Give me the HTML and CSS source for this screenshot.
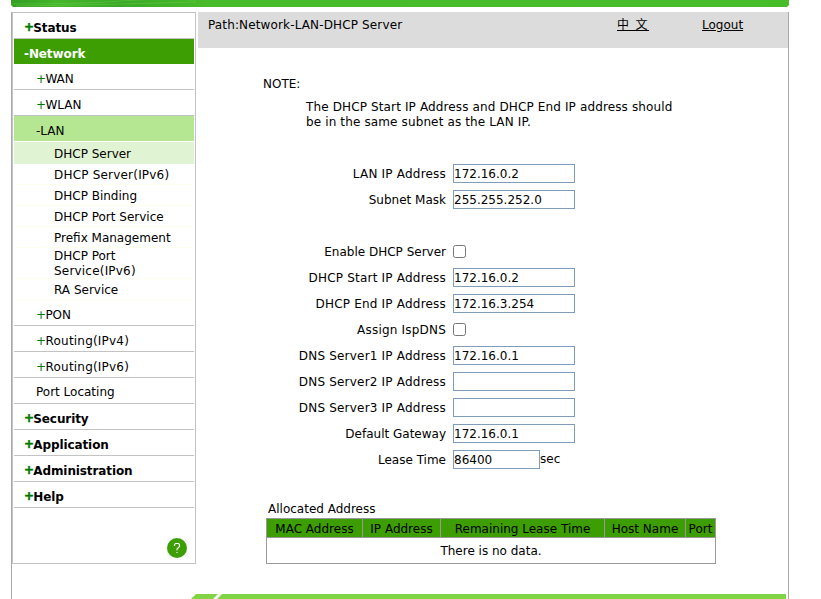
FILE: index.html
```html
<!DOCTYPE html>
<html lang="en">
<head>
<meta charset="utf-8">
<title>DHCP Server</title>
<link rel="stylesheet" href="styles.css">
</head>
<body>
<div class="banner"><svg width="778" height="7" viewBox="0 0 778 7"><defs><linearGradient id="g" x1="0" x2="1"><stop offset="0" stop-color="#329f22"/><stop offset=".06" stop-color="#46b62c"/><stop offset=".14" stop-color="#3aa928"/><stop offset=".25" stop-color="#48bb2a"/><stop offset="1" stop-color="#48bd2a"/></linearGradient></defs><path d="M0 0H778V5L776 7H2L0 5Z" fill="url(#g)"/><path d="M0 4Q70 4 110 1T185 0M5 6Q80 5 185 2" fill="none" stroke="#6cce4c" stroke-width=".7" opacity=".6"/></svg></div>
<div class="page">
  <nav class="menu">
    <ul class="items">
      <li class="top"><i>+</i>Status</li>
      <li class="top open">-Network</li>
      <li class="mid"><i>+</i>WAN</li>
      <li class="mid"><i>+</i>WLAN</li>
      <li class="mid current">-LAN</li>
      <li class="sub selected">DHCP Server</li>
      <li class="sub wide">DHCP Server(IPv6)</li>
      <li class="sub">DHCP Binding</li>
      <li class="sub">DHCP Port Service</li>
      <li class="sub">Prefix Management</li>
      <li class="sub double">DHCP Port<br><span class="wide">Service(IPv6)</span></li>
      <li class="sub">RA Service</li>
      <li class="mid"><i>+</i>PON</li>
      <li class="mid wide"><i>+</i>Routing(IPv4)</li>
      <li class="mid wide"><i>+</i>Routing(IPv6)</li>
      <li class="mid leaf">Port Locating</li>
      <li class="top"><i>+</i>Security</li>
      <li class="top"><i>+</i>Application</li>
      <li class="top"><i>+</i>Administration</li>
      <li class="top"><i>+</i>Help</li>
    </ul>
    <div class="help"><svg width="22" height="20" viewBox="0 0 22 20"><path d="M0 0H22V20H0Z" fill="#f8f8f8"/><circle cx="10" cy="10" r="10" fill="#3c9e02"/><path d="M7.500 8V6.500L8.500 5.500H11.500L12.500 6.500V8.500L10 11V12.500M10 14V15" fill="none" stroke="#fff" stroke-width="1.100"/></svg></div>
  </nav>
  <main class="main">
    <header class="path"><span class="crumb">Path:Network-LAN-DHCP Server</span><a class="lang">中 文</a><a class="logout">Logout</a></header>
    <section class="note"><div>NOTE:</div><p>The DHCP Start IP Address and DHCP End IP address should<br>be in the same subnet as the LAN IP.</p></section>
    <form class="form">
      <label class="wide">LAN IP Address</label><div><input type="text" value="172.16.0.2"></div>
      <label>Subnet Mask</label><div><input type="text" value="255.255.252.0"></div>
      <span class="space"></span>
      <label>Enable DHCP Server</label><div><input type="checkbox"></div>
      <label class="wide">DHCP Start IP Address</label><div><input type="text" value="172.16.0.2"></div>
      <label class="wide">DHCP End IP Address</label><div><input type="text" value="172.16.3.254"></div>
      <label class="wide">Assign IspDNS</label><div><input type="checkbox"></div>
      <label class="wide">DNS Server1 IP Address</label><div><input type="text" value="172.16.0.1"></div>
      <label class="wide">DNS Server2 IP Address</label><div><input type="text"></div>
      <label class="wide">DNS Server3 IP Address</label><div><input type="text"></div>
      <label>Default Gateway</label><div><input type="text" value="172.16.0.1"></div>
      <label>Lease Time</label><div><input class="short" type="text" value="86400"><span class="unit">sec</span></div>
    </form>
    <section class="leases">
      <div class="caption">Allocated Address</div>
      <table>
        <colgroup><col class="c1"><col class="c2"><col class="c3"><col class="c4"><col class="c5"></colgroup>
        <tr class="head"><th>MAC Address</th><th>IP Address</th><th>Remaining Lease Time</th><th>Host Name</th><th>Port</th></tr>
        <tr class="empty"><td colspan="5">There is no data.</td></tr>
      </table>
    </section>
    <footer><svg width="596" height="5" viewBox="0 0 596 5"><path d="M0 5L5 0H27L22 5Z" fill="#80d544"/><path d="M26 5L31 0H595V5Z" fill="#80d544"/></svg></footer>
  </main>
</div>
</body>
</html>
```
FILE: styles.css
```css
* { box-sizing: border-box; }
body { margin: 0; width: 821px; height: 599px; overflow: hidden; background: #fff; color: #000; font: 12px/15px Verdana, "DejaVu Sans", "Noto Sans CJK SC", sans-serif; }
svg { display: block; }
.banner { margin-left: 11px; height: 12px; }
.page { display: flex; margin-left: 11px; width: 778px; height: 587px; border: solid #aaa; border-width: 0 1px; }
.menu { width: 184px; height: 552px; border: 1px solid #c3c3c3; padding: 0 1px; flex: none; }
.items { list-style: none; margin: 0; padding: 0; white-space: nowrap; }
.items i { font-style: normal; color: #007800; margin-right: -.7px; }
.wide { letter-spacing: .2px; }
.top, .mid { height: 26px; border-bottom: 1px solid #c3c3c3; }
.top { padding: 8px 0 0 10px; font-weight: bold; letter-spacing: -.1px; }
.top i { position: relative; top: -1px; -webkit-text-stroke: .5px #007800; }
.open { background: #3c9e02; color: #fff; height: 25px; border: 0; }
.mid { padding: 8px 0 0 22px; }
.current { background: #b5e692; height: 25px; border: 0; }
.leaf { padding-top: 7px; }
.sub { height: 21px; padding: 4px 0 0 40px; border-bottom: 1px solid #fbffeb; }
.selected { height: 23px; padding-top: 5px; background: #e0f4d3; background-clip: padding-box; border-top: 1px solid #fff; border-bottom: 0; }
.double { height: 31px; padding-top: 1px; }
.help { display: flex; justify-content: flex-end; margin: 30px 5px 0 0; }
.main { flex: 1; min-width: 0; margin-left: 2px; display: flex; flex-direction: column; }
.path { height: 36px; flex: none; display: flex; background: #dcdcdc; padding: 6px 44px 0 10px; }
.crumb { flex: 1; letter-spacing: .14px; }
.path a { text-decoration: underline; }
.lang { margin-right: 55px; width: 30px; white-space: nowrap; letter-spacing: 1.4px; }
.logout { width: 41px; margin-right: 1px; }
.note { padding: 29px 0 0 65px; height: 112px; }
.note p { margin: 8px 0 0 43px; white-space: nowrap; letter-spacing: .13px; }
.form { display: grid; grid-template-columns: 248px 1fr; grid-auto-rows: 26px; column-gap: 7px; align-items: center; }
.form label { text-align: right; white-space: nowrap; padding-top: 2px; }
.form div { display: flex; align-items: center; height: 26px; }
.space { grid-column: 1 / -1; }
input[type=text] { width: 122px; height: 19px; border: 1px solid #7f9db9; padding: 2px 0 0; margin: 0; font: inherit; color: #000; background: #fff; }
input.short { width: 87px; }
input[type=checkbox] { width: 13px; height: 13px; margin: 0; }
.unit { margin-top: 1px; }
.leases { margin: 30px 0 0 68px; width: 450px; }
.caption { padding-left: 2px; height: 16px; }
table { width: 450px; table-layout: fixed; border-collapse: collapse; }
.c1 { width: 96px; } .c2 { width: 78px; } .c3 { width: 164px; } .c4 { width: 81px; } .c5 { width: 30px; }
th, td { border: 1px solid #999; padding: 2px 0 0; font-weight: normal; text-align: center; white-space: nowrap; }
.head { height: 19px; background: #3c9e02; }
.empty { height: 26px; }
footer { margin: auto 0 0 -7px; height: 5px; }
```
